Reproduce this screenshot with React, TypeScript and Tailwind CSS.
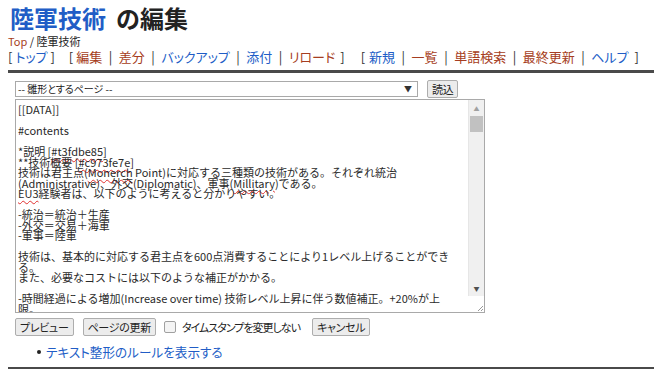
import React from "react";

const LINK = "text-[#215dc6]";
const VISITED = "text-[#a63d21]";
const PALT = "[font-feature-settings:'palt']";

function Sp({ children }: { children: React.ReactNode }) {
  return (
    <span className="underline decoration-wavy decoration-[#e03030] decoration-1 underline-offset-2">
      {children}
    </span>
  );
}

function NavLink({ label, visited }: { label: string; visited?: boolean }) {
  return <span className={visited ? VISITED : LINK}>{label}</span>;
}

function Sep() {
  return <span className="text-[#333] mx-[6.5px]">|</span>;
}

function Btn({ children, className = "" }: { children: React.ReactNode; className?: string }) {
  return (
    <button
      className={`h-[18px] px-[4px] border border-[#adadad] bg-[#ececec] text-[11px] leading-[14px] text-[#222] rounded-[2px] tracking-[-0.3px] ${PALT} ${className}`}
    >
      {children}
    </button>
  );
}

export default function App() {
  const group1: [string, boolean][] = [
    ["編集", true],
    ["差分", true],
    ["バックアップ", false],
    ["添付", false],
    ["リロード", true],
  ];
  const group2: [string, boolean][] = [
    ["新規", false],
    ["一覧", true],
    ["単語検索", true],
    ["最終更新", true],
    ["ヘルプ", false],
  ];

  return (
    <div className="min-h-[375px] bg-white pl-2 pt-[4px] text-[#222] font-['Noto_Sans_CJK_JP','Noto_Sans',sans-serif]">
      <h1 className="text-[24px] font-bold leading-[28px] pl-[2px]">
        <span className={LINK}>陸軍技術</span>
        <span className="ml-[10px]">の編集</span>
      </h1>
      <div className="text-[11px] leading-[14px] mt-[2px]">
        <span className={VISITED}>Top</span> / 陸軍技術
      </div>
      <div className={`text-[13px] leading-[18px] text-[#333] whitespace-nowrap ${PALT}`}>
        [ <NavLink label="トップ" /> ]<span className="ml-[14px] mr-[3px]">[</span>
        {group1.map(([l, v], i) => (
          <React.Fragment key={l}>
            {i > 0 && <Sep />}
            <NavLink label={l} visited={v} />
          </React.Fragment>
        ))}
        <span className="ml-[5px]">]</span>
        <span className="ml-[16px] mr-[4px]">[</span>
        {group2.map(([l, v], i) => (
          <React.Fragment key={l}>
            {i > 0 && <Sep />}
            <NavLink label={l} visited={v} />
          </React.Fragment>
        ))}
        <span className="ml-[6px]">]</span>
      </div>
      <div className="h-[3px] bg-[#4a4a4a] mt-[4px]" />

      <div className="ml-[7px] mt-[7px] w-[470px]">
        <div className="flex items-center gap-[9px]">
          <div className="relative w-[403px] h-[16px] border border-[#a9a9a9] bg-white">
            <div className={`text-[10px] leading-[14px] pl-[2px] text-[#222] ${PALT}`}>-- 雛形とするページ --</div>
            <span className="absolute right-[5px] top-[2px] text-[8px] leading-[10px] text-[#333]">▼</span>
          </div>
          <Btn>読込</Btn>
        </div>

        <div className="mt-[1px] flex h-[214px] border border-[#a9a9a9] bg-white">
          <div className="flex-1 overflow-hidden whitespace-pre pl-[2px] pt-[4px] text-[11px] leading-[10.5px] text-[#2a2a2a]">
            {"[[DATA]]\n\n#contents\n\n*説明 ["}
            <Sp>#t3fdbe85</Sp>
            {"]\n**技術概要 ["}
            <Sp>#c973fe7e</Sp>
            {"]\n技術は君主点("}
            <Sp>Monerch</Sp>
            {" Point)に対応する三種類の技術がある。それぞれ統治\n(Administrative)、外交(Diplomatic)、軍事("}
            <Sp>Millitary</Sp>
            {")である。\n"}
            <Sp>EU3</Sp>
            {"経験者は、以下のように考えると分かりやすい。\n\n-統治＝統治＋生産\n-外交＝交易＋海軍\n-軍事＝陸軍\n\n技術は、基本的に対応する君主点を600点消費することにより1レベル上げることができ\nる。\nまた、必要なコストには以下のような補正がかかる。\n\n-時間経過による増加(Increase over time) 技術レベル上昇に伴う数値補正。+20%が上\n限。\n-技術格差による補正(Neighbour bonus) 隣接国が技術を持っている場合に軽減される。"}
          </div>
          <div className="w-[16px] flex flex-col">
            <div className="flex-1 flex flex-col bg-[#f0f0f0] border-l border-[#e6e6e6]">
              <div className="h-[16px] flex items-center justify-center text-[6px] text-[#a0a0a0]">▲</div>
              <div className="mx-[1px] h-[16px] bg-[#c1c1c1]" />
              <div className="flex-1" />
              <div className="h-[16px] flex items-center justify-center text-[6px] text-[#505050]">▼</div>
            </div>
            <div className="h-[16px] bg-white flex items-end justify-end">
              <svg width="8" height="8" viewBox="0 0 8 8">
                <path d="M7 2 L2 7 M7 5 L5 7" stroke="#999" strokeWidth="1" />
              </svg>
            </div>
          </div>
        </div>

        <div className="mt-[5px] flex items-center text-[11px] text-[#222]">
          <Btn>プレビュー</Btn>
          <Btn className="ml-[9px]">ページの更新</Btn>
          <span className="ml-[8px] w-[12px] h-[12px] border border-[#a0a0a0] bg-[#f4f4f4] rounded-[2px]" />
          <span className={`ml-[6px] text-[11px] tracking-[-1px] ${PALT}`}>タイムスタンプを変更しない</span>
          <Btn className="ml-[12px]">キャンセル</Btn>
        </div>
      </div>

      <ul className={`mt-[8px] ml-[29px] text-[12.6px] leading-[16px] ${PALT}`}>
        <li className="flex items-center">
          <span className="w-[4px] h-[4px] rounded-full bg-[#222] mr-[5px]" />
          <span className={LINK}>テキスト整形のルールを表示する</span>
        </li>
      </ul>
      <div className="h-[2px] bg-[#4a4a4a] mt-[7px]" />
    </div>
  );
}
